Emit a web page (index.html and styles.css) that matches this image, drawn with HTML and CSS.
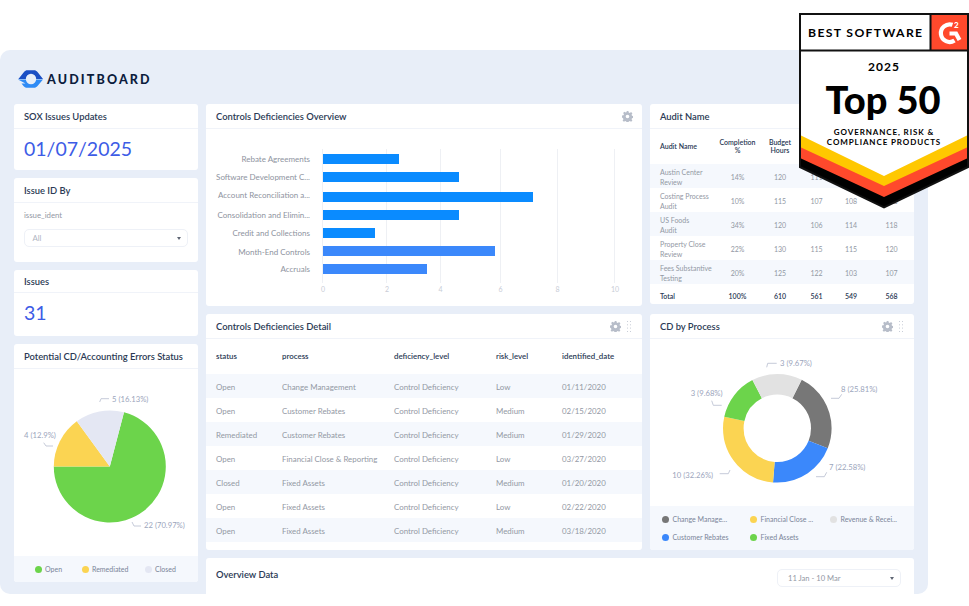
FILE: index.html
```html
<!DOCTYPE html>
<html lang="en">
<head>
<meta charset="utf-8">
<title>AuditBoard dashboard</title>
<link rel="stylesheet" href="styles.css">
</head>
<body>
<main class="panel">
  <header class="brand">
    <svg class="brand-mark" viewBox="0 0 25 18" width="25" height="18">
      <path d="M0 9.500L6 2C7 .8 8 .3 9.500 .3H16C17.500 .3 18.500 .8 19.500 2L25 9H0Z" fill="#1b4fc4"/>
      <path d="M0 9.500H25L19.500 16C18.500 17.200 17.500 17.800 16 17.800H9C7.500 17.800 6.500 17.200 5.500 16L3.500 13.500H7.500Z" fill="#2f8bf5"/>
      <circle cx="13" cy="9" r="5.200" fill="#e8eef8"/>
    </svg>
    <span class="brand-name">AUDITBOARD</span>
  </header>

  <div class="layout">
    <div class="col-left">
      <section class="card card-sox">
        <h2 class="card-head">SOX Issues Updates</h2>
        <div class="big-value">01/07/2025</div>
      </section>
      <section class="card card-filter">
        <h2 class="card-head">Issue ID By</h2>
        <div class="filter-body">
          <div class="filter-label">issue_ident</div>
          <div class="select"><span>All</span><i class="caret"></i></div>
        </div>
      </section>
      <section class="card card-issues">
        <h2 class="card-head">Issues</h2>
        <div class="big-value">31</div>
      </section>
      <section class="card card-pie">
        <h2 class="card-head">Potential CD/Accounting Errors Status</h2>
        <svg class="chart pie-chart" viewBox="14 369 184 187" width="184" height="187">
          <path d="M109.800 466.500L124 412.300A56 56 0 1 1 53.800 466.500Z" fill="#6cd44b"/>
          <path d="M109.800 466.500L53.800 466.500A56 56 0 0 1 76.800 421.300Z" fill="#fbd452"/>
          <path d="M109.800 466.500L76.800 421.300A56 56 0 0 1 124 412.300Z" fill="#e4e7f3"/>
          <g class="leader">
            <path d="M99.700 402L101 398.700H109"/>
            <path d="M43.700 442.700L46 446H53"/>
            <path d="M132 522L134 526H141"/>
          </g>
          <g class="slice-label">
            <text x="112" y="402">5 (16.13%)</text>
            <text x="24" y="438">4 (12.9%)</text>
            <text x="144" y="528">22 (70.97%)</text>
          </g>
        </svg>
        <div class="legend legend-pie">
          <span class="legend-item"><i class="dot dot-green"></i>Open</span>
          <span class="legend-item"><i class="dot dot-yellow"></i>Remediated</span>
          <span class="legend-item"><i class="dot dot-pale"></i>Closed</span>
        </div>
      </section>
    </div>

    <div class="col-right">
      <div class="row row-top">
        <section class="card card-bars">
          <div class="card-head head-tools">
            <h2 class="head-title">Controls Deficiencies Overview</h2>
            <svg class="gear" viewBox="0 0 24 24" width="11" height="11"><use href="#gear"/></svg>
          </div>
          <svg class="chart" viewBox="206 129 436 177" width="436" height="177">
            <g class="grid-lines">
              <path d="M322.500 149V283M386.500 149V283M440.500 149V283M500.500 149V283M557.500 149V283M614.500 149V283"/>
            </g>
            <g class="bar-a">
              <rect x="323" y="154" width="76" height="10"/>
              <rect x="323" y="172" width="136" height="10"/>
              <rect x="323" y="192" width="210" height="10"/>
              <rect x="323" y="210" width="136" height="10"/>
              <rect x="323" y="228" width="52" height="10"/>
            </g>
            <g class="bar-b">
              <rect x="323" y="246" width="172" height="10"/>
              <rect x="323" y="264" width="104" height="10"/>
            </g>
            <g class="bar-label">
              <text x="310" y="162">Rebate Agreements</text>
              <text x="310" y="180">Software Development C...</text>
              <text x="310" y="198">Account Reconciliation a...</text>
              <text x="310" y="218">Consolidation and Elimin...</text>
              <text x="310" y="236">Credit and Collections</text>
              <text x="310" y="255">Month-End Controls</text>
              <text x="310" y="272">Accruals</text>
            </g>
            <g class="tick-label">
              <text x="323" y="292">0</text>
              <text x="387" y="292">2</text>
              <text x="440.500" y="292">4</text>
              <text x="500.500" y="292">6</text>
              <text x="557.500" y="292">8</text>
              <text x="615" y="292">10</text>
            </g>
          </svg>
        </section>

        <section class="card card-audit">
          <h2 class="card-head">Audit Name</h2>
          <table class="audit-table">
            <colgroup><col class="a1"><col class="a2"><col class="a3"><col class="a4"><col class="a5"><col class="a6"></colgroup>
            <thead>
              <tr><th>Audit Name</th><th>Completion<br>%</th><th>Budget<br>Hours</th><th></th><th></th><th></th></tr>
            </thead>
            <tbody>
              <tr><td>Austin Center<br>Review</td><td>14%</td><td>120</td><td>111</td><td>109</td><td>110</td></tr>
              <tr><td>Costing Process<br>Audit</td><td>10%</td><td>115</td><td>107</td><td>108</td><td>113</td></tr>
              <tr><td>US Foods<br>Audit</td><td>34%</td><td>120</td><td>106</td><td>114</td><td>118</td></tr>
              <tr><td>Property Close<br>Review</td><td>22%</td><td>130</td><td>115</td><td>115</td><td>120</td></tr>
              <tr><td>Fees Substantive<br>Testing</td><td>20%</td><td>125</td><td>122</td><td>103</td><td>107</td></tr>
            </tbody>
            <tfoot>
              <tr><td>Total</td><td>100%</td><td>610</td><td>561</td><td>549</td><td>568</td></tr>
            </tfoot>
          </table>
        </section>
      </div>

      <div class="row row-mid">
        <section class="card card-detail">
          <div class="card-head head-tools">
            <h2 class="head-title">Controls Deficiencies Detail</h2>
            <svg class="gear" viewBox="0 0 24 24" width="11" height="11"><use href="#gear"/></svg>
            <svg class="grip" viewBox="0 0 4 11" width="4" height="11"><use href="#grip"/></svg>
          </div>
          <table class="detail-table">
            <colgroup><col class="d1"><col class="d2"><col class="d3"><col class="d4"><col class="d5"></colgroup>
            <thead>
              <tr><th>status</th><th>process</th><th>deficiency_level</th><th>risk_level</th><th>identified_date</th></tr>
            </thead>
            <tbody>
              <tr><td>Open</td><td>Change Management</td><td>Control Deficiency</td><td>Low</td><td>01/11/2020</td></tr>
              <tr><td>Open</td><td>Customer Rebates</td><td>Control Deficiency</td><td>Medium</td><td>02/15/2020</td></tr>
              <tr><td>Remediated</td><td>Customer Rebates</td><td>Control Deficiency</td><td>Medium</td><td>01/29/2020</td></tr>
              <tr><td>Open</td><td>Financial Close &amp; Reporting</td><td>Control Deficiency</td><td>Low</td><td>03/27/2020</td></tr>
              <tr><td>Closed</td><td>Fixed Assets</td><td>Control Deficiency</td><td>Medium</td><td>01/20/2020</td></tr>
              <tr><td>Open</td><td>Fixed Assets</td><td>Control Deficiency</td><td>Low</td><td>02/22/2020</td></tr>
              <tr><td>Open</td><td>Fixed Assets</td><td>Control Deficiency</td><td>Medium</td><td>03/18/2020</td></tr>
            </tbody>
          </table>
        </section>

        <section class="card card-donut">
          <div class="card-head head-tools">
            <h2 class="head-title">CD by Process</h2>
            <svg class="gear" viewBox="0 0 24 24" width="11" height="11"><use href="#gear"/></svg>
            <svg class="grip" viewBox="0 0 4 11" width="4" height="11"><use href="#grip"/></svg>
          </div>
          <svg class="chart donut-chart" viewBox="650 339 264 167" width="264" height="167">
            <g fill="none" stroke-width="20.600" transform="rotate(-90 777.300 428.300)">
              <circle cx="777.300" cy="428.300" r="44" pathLength="360" stroke="#777777" stroke-dasharray="85 275" stroke-dashoffset="-26.700"/>
              <circle cx="777.300" cy="428.300" r="44" pathLength="360" stroke="#3b88fb" stroke-dasharray="72.900 287.100" stroke-dashoffset="-111.700"/>
              <circle cx="777.300" cy="428.300" r="44" pathLength="360" stroke="#fbd452" stroke-dasharray="97.800 262.200" stroke-dashoffset="-184.600"/>
              <circle cx="777.300" cy="428.300" r="44" pathLength="360" stroke="#6cd44b" stroke-dasharray="50.300 309.700" stroke-dashoffset="-282.400"/>
              <circle cx="777.300" cy="428.300" r="44" pathLength="360" stroke="#e2e2e2" stroke-dasharray="54 306" stroke-dashoffset="-332.700"/>
            </g>
            <g class="leader">
              <path d="M766.700 367.300L767.700 363.300H776.700"/>
              <path d="M831 398.300H839L841.700 394.300"/>
              <path d="M816 476.700H824.300L826.700 472.300"/>
              <path d="M719.700 473.700H728.300L730 470"/>
              <path d="M711.700 400.700L713.300 405.300H721.700"/>
            </g>
            <g class="slice-label">
              <text x="780" y="366">3 (9.67%)</text>
              <text x="841" y="392">8 (25.81%)</text>
              <text x="829" y="470">7 (22.58%)</text>
              <text x="672.300" y="478">10 (32.26%)</text>
              <text x="690.700" y="396.300">3 (9.68%)</text>
            </g>
          </svg>
          <div class="legend legend-donut">
            <span class="legend-item"><i class="dot dot-gray"></i>Change Manage...</span>
            <span class="legend-item"><i class="dot dot-yellow"></i>Financial Close ...</span>
            <span class="legend-item"><i class="dot dot-light"></i>Revenue &amp; Recei...</span>
            <span class="legend-item"><i class="dot dot-blue"></i>Customer Rebates</span>
            <span class="legend-item"><i class="dot dot-green"></i>Fixed Assets</span>
          </div>
        </section>
      </div>

      <section class="card card-data">
        <h2 class="head-title">Overview Data</h2>
        <div class="select select-date"><span>11 Jan - 10 Mar</span><i class="caret"></i></div>
      </section>
    </div>
  </div>
</main>

<aside class="badge">
  <svg viewBox="0 0 170 196" width="170" height="196">
    <path d="M1 1H169V154L85 194.500L1 154Z" fill="#fff"/>
    <path d="M1 122L85 163L169 122V154L85 194.500L1 154Z" fill="#ffc800"/>
    <path d="M1 134L85 173L169 134V154L85 194.500L1 154Z" fill="#ff492c"/>
    <path d="M1 145L85 184L169 145V154L85 194.500L1 154Z" fill="#000"/>
    <rect x="131.500" y="1" width="37.500" height="36" fill="#ff492c"/>
    <path d="M1 1H169V154L85 194.500L1 154Z" fill="none" stroke="#111" stroke-width="2"/>
    <path d="M1 37.500H169M131.500 1V37.500" stroke="#111" stroke-width="2" fill="none"/>
    <path class="g2-mark" d="M153.500 11.800A8.800 8.800 0 1 0 155.500 27.500"/>
    <path class="g2-mark" d="M150.500 20.500H157L160.500 27"/>
    <text class="b-best" x="9" y="23.500">BEST SOFTWARE</text>
    <text class="b-two" x="155" y="15">2</text>
    <text class="b-year" x="85" y="58">2025</text>
    <text class="b-top" x="84" y="101">Top 50</text>
    <text class="b-cat" x="85" y="122">GOVERNANCE, RISK &amp;</text>
    <text class="b-cat" x="85" y="132">COMPLIANCE PRODUCTS</text>
  </svg>
</aside>

<svg class="defs" width="0" height="0" aria-hidden="true">
  <defs>
    <symbol id="gear" viewBox="0 0 24 24">
      <path fill="#b7bdc9" fill-rule="evenodd" d="M10 0h4l.7 3.300 2.300 1 2.900-1.900 2.800 2.800-1.900 2.900 1 2.300 3.200.6v4l-3.200.7-1 2.300 1.900 2.900-2.800 2.800-2.900-1.900-2.300 1-.7 3.200h-4l-.7-3.200-2.300-1-2.900 1.900-2.800-2.800 1.900-2.900-1-2.300L0 14v-4l3.300-.6 1-2.300L2.400 4.200l2.800-2.800 2.900 1.900 2.300-1zM12 8a4 4 0 1 0 0 8 4 4 0 0 0 0-8z"/>
    </symbol>
    <symbol id="grip" viewBox="0 0 4 11">
      <g fill="#c9ced8">
        <rect x="0" y="0" width="1" height="1"/><rect x="3" y="0" width="1" height="1"/>
        <rect x="0" y="3.300" width="1" height="1"/><rect x="3" y="3.300" width="1" height="1"/>
        <rect x="0" y="6.600" width="1" height="1"/><rect x="3" y="6.600" width="1" height="1"/>
        <rect x="0" y="10" width="1" height="1"/><rect x="3" y="10" width="1" height="1"/>
      </g>
    </symbol>
  </defs>
</svg>
</body>
</html>
```
FILE: styles.css
```css
* { box-sizing: border-box; }
html, body { margin: 0; padding: 0; }
body {
  position: relative;
  width: 969px;
  height: 606px;
  padding-top: 50px;
  overflow: hidden;
  background: #fff;
  font-family: Lato, "Liberation Sans", sans-serif;
  color: #2b3a55;
}
.defs { position: absolute; }

.panel {
  width: 928px;
  height: 544px;
  padding: 0 14px;
  overflow: hidden;
  background: #e8eef8;
  border-radius: 10px;
}
.brand {
  display: flex;
  align-items: center;
  gap: 4px;
  height: 54px;
  padding: 4px 0 0 4px;
}
.brand-name {
  font-size: 12.500px;
  font-weight: 900;
  letter-spacing: 2.150px;
  color: #0c1c3d;
}

.layout { display: flex; gap: 8px; }
.col-left { display: flex; flex-direction: column; gap: 8px; width: 184px; }
.col-right { display: flex; flex-direction: column; gap: 8px; width: 708px; }
.row { display: flex; gap: 8px; align-items: flex-start; }

.card {
  display: block;
  background: #fff;
  border-radius: 3px;
  overflow: hidden;
}
.card-sox { height: 66px; }
.card-filter { height: 84px; }
.card-issues { height: 66px; }
.card-pie { height: 238px; }
.card-bars { width: 436px; height: 202px; }
.card-audit { width: 264px; height: 200px; }
.card-detail { width: 436px; height: 236px; }
.card-donut { width: 264px; height: 236px; }
.card-data {
  display: flex;
  align-items: flex-start;
  justify-content: space-between;
  height: 36px;
  padding: 11px 13px 0 10px;
  border-radius: 3px 3px 0 0;
}

.card-head {
  display: flex;
  align-items: center;
  height: 25px;
  margin: 0;
  padding: 1px 10px 0;
  border-bottom: 1px solid #f0f3f9;
  font-size: 9.400px;
  font-weight: 600;
  color: #2b3a55;
}
.card-issues .card-head { height: 23px; padding-top: 0; }
.head-title { flex: 1; margin: 0; font-size: 9.400px; font-weight: 600; line-height: 12px; color: #2b3a55; }
.head-tools { gap: 6px; padding-right: 9.500px; }
.grip { margin-right: 2px; }

.big-value {
  padding: 6.500px 10px 0;
  font-size: 19.500px;
  line-height: 25px;
  color: #3d5ce6;
}

.filter-body { padding: 7px 10px 0 9.500px; }
.filter-label { font-size: 7.800px; line-height: 10px; color: #9398a4; padding-left: 0.500px; }
.select {
  display: flex;
  align-items: center;
  justify-content: space-between;
  height: 18px;
  margin-top: 9px;
  padding: 0 6px 0 8px;
  border: 1px solid #eef1f7;
  border-radius: 5px;
  font-size: 7.800px;
  color: #b0b5bf;
}
.select-date {
  width: 124px;
  margin-top: 0;
  padding: 0 6px 0 10px;
  font-size: 7.600px;
  color: #9398a4;
}
.caret {
  width: 0;
  height: 0;
  border-left: 2px solid transparent;
  border-right: 2px solid transparent;
  border-top: 3px solid #5f6674;
}

.chart { display: block; }
.bar-a { fill: #0a8bff; }
.bar-b { fill: #3b88fb; }
.grid-lines { stroke: #eef0f4; stroke-width: 1; fill: none; }
.bar-label { font-size: 8px; fill: #8e93a0; text-anchor: end; }
.tick-label { font-size: 7px; fill: #c8ccd6; text-anchor: middle; }
.leader { stroke: #b6bdce; stroke-width: 0.800; fill: none; }
.slice-label { font-size: 7.700px; fill: #9ba5bc; }

.legend { background: #f5f8fd; font-size: 7px; color: #7a8499; }
.legend-pie {
  display: grid;
  grid-template-columns: 47px 63px 1fr;
  align-items: center;
  height: 26px;
  padding-left: 20.500px;
}
.legend-donut {
  display: grid;
  grid-template-columns: 88px 80px 1fr;
  grid-auto-rows: 18px;
  align-items: center;
  height: 44px;
  padding: 4px 0 0 12px;
}
.legend-item { display: flex; align-items: center; gap: 3.500px; white-space: nowrap; }
.dot { display: block; width: 7px; height: 7px; border-radius: 50%; }
.dot-green { background: #6cd44b; }
.dot-yellow { background: #fbd452; }
.dot-pale { background: #e4e7f3; }
.dot-gray { background: #777; }
.dot-light { background: #e2e2e2; }
.dot-blue { background: #3b88fb; }

table { width: 100%; border-collapse: collapse; table-layout: fixed; }
th { font-weight: 600; color: #2b3a55; }
.audit-table { font-size: 7px; color: #9398a4; }
.audit-table thead tr { height: 35px; }
.audit-table th { padding: 0 0 1px; text-align: center; line-height: 8px; font-size: 7px; }
.audit-table td { padding: 2px 0 0; height: 24px; text-align: center; line-height: 10px; white-space: nowrap; }
.audit-table th:first-child,
.audit-table td:first-child { padding-left: 10px; text-align: left; }
.audit-table tbody tr:nth-child(odd),
.detail-table tbody tr:nth-child(odd) { background: #f5f8fd; }
.audit-table tfoot td { height: 20px; padding-top: 3px; font-weight: 600; color: #2b3a55; }
.a1 { width: 65px; } .a2 { width: 45px; } .a3 { width: 40px; }
.a4 { width: 33px; } .a5 { width: 36px; } .a6 { width: 45px; }

.detail-table { font-size: 7.900px; color: #9398a4; }
.detail-table thead tr { height: 35px; }
.detail-table th { padding: 0 0 2px; text-align: left; font-size: 7.900px; }
.detail-table td { padding: 2px 0 0; height: 24px; white-space: nowrap; }
.detail-table th:first-child,
.detail-table td:first-child { padding-left: 10px; }
.d1 { width: 76px; } .d2 { width: 112px; } .d3 { width: 102px; } .d4 { width: 66px; } .d5 { width: 80px; }

.badge { position: absolute; left: 799px; top: 13px; width: 170px; height: 196px; }
.badge svg { display: block; }
.badge text { font-family: Lato, sans-serif; fill: #000; }
.badge .b-two { font-size: 8px; font-weight: 900; fill: #fff; }
.b-best { font-size: 12.200px; font-weight: 700; letter-spacing: 1.350px; }
.b-year { font-size: 12px; font-weight: 700; text-anchor: middle; letter-spacing: 1px; }
.b-top { font-size: 38px; font-weight: 900; text-anchor: middle; }
.b-cat { font-size: 8px; font-weight: 700; text-anchor: middle; letter-spacing: 0.900px; }
.g2-mark { fill: none; stroke: #fff; stroke-width: 4.200; }
```
